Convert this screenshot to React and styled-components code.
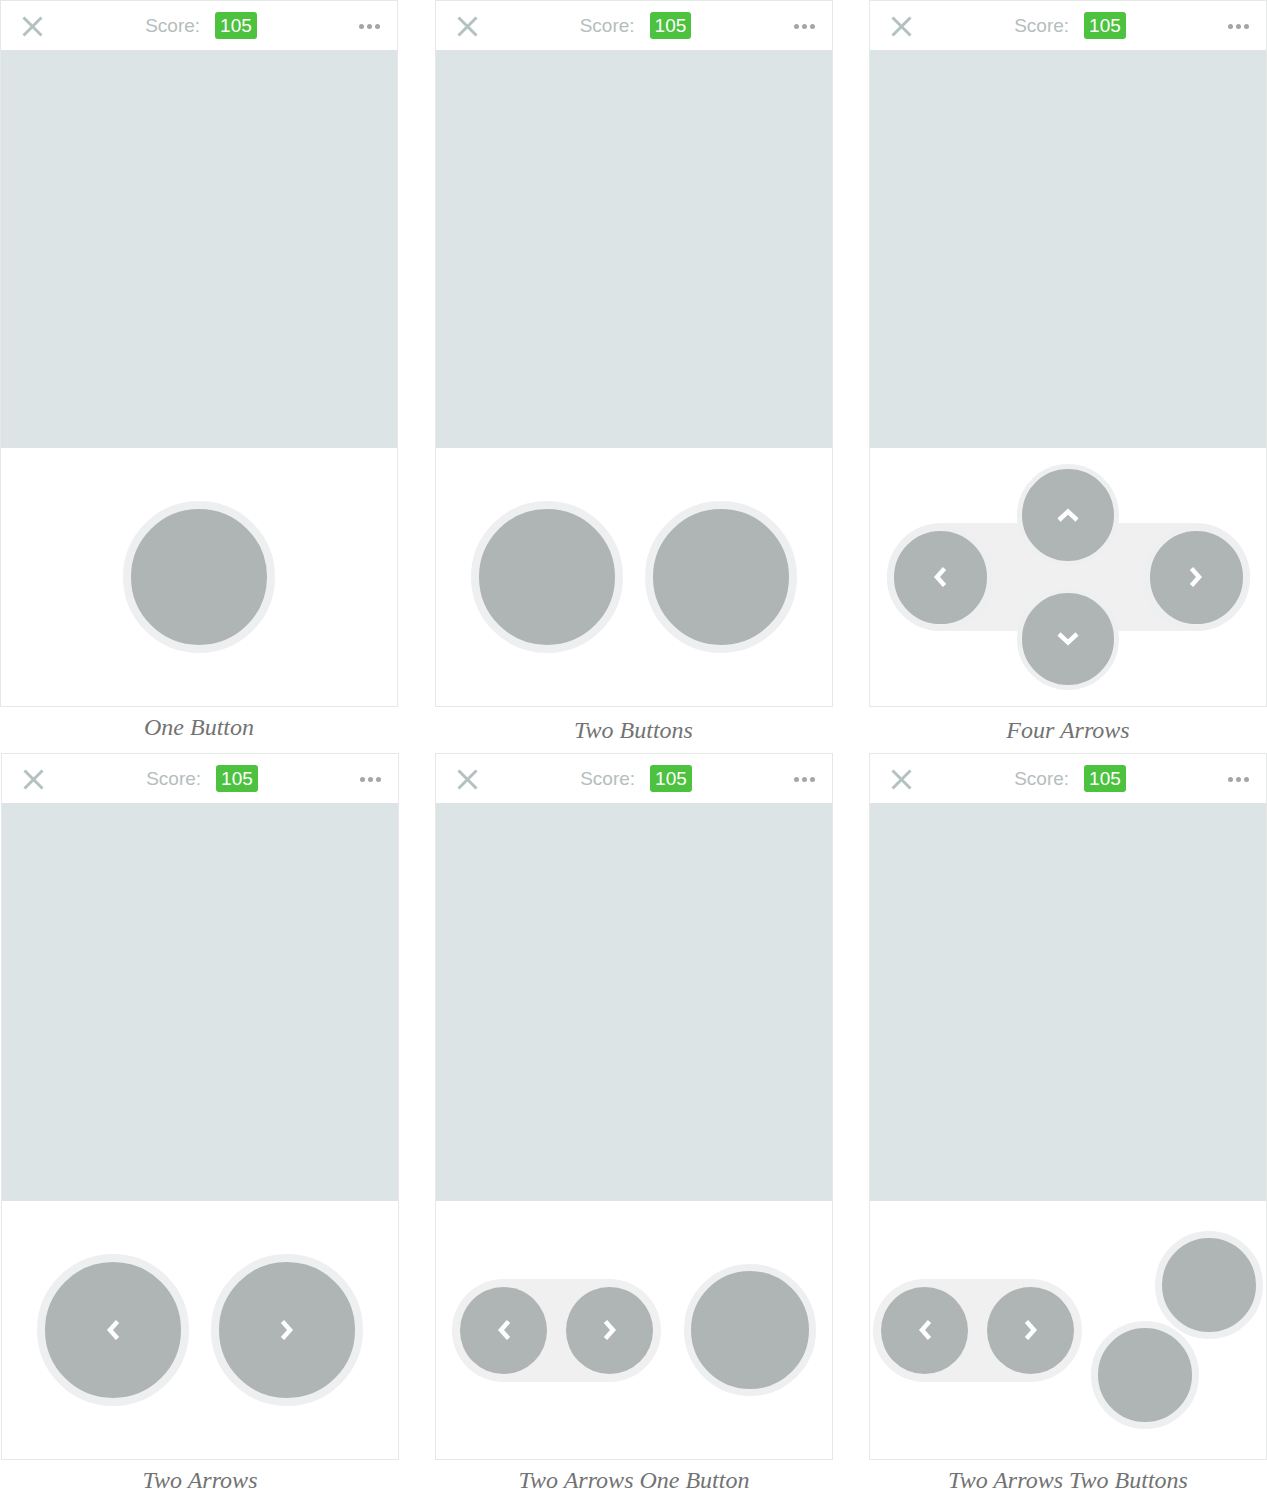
import React from 'react';
import styled, { createGlobalStyle } from 'styled-components';

const GlobalStyle = createGlobalStyle`
  body {
    margin: 0;
    background: #ffffff;
  }
`;

const Page = styled.div`
  width: 1267px;
  height: 1506px;
  display: flex;
  flex-direction: column;
`;

const Row = styled.div`
  display: grid;
  grid-template-columns: repeat(3, 398px);
  justify-content: space-between;
  padding-left: ${(props) => (props.$nudge ? '1px' : '0')};
  width: ${(props) => (props.$nudge ? '1266px' : '1267px')};
`;

const Figure = styled.div`
  display: flex;
  flex-direction: column;
`;

const Card = styled.div`
  border: 1px solid #e6e7e7;
  display: flex;
  flex-direction: column;
`;

const Header = styled.div`
  height: 49px;
  display: grid;
  grid-template-columns: 1fr auto 1fr;
  align-items: center;
  padding: 0 17px 0 21px;
  box-sizing: border-box;
`;

const CloseIcon = styled.svg`
  justify-self: start;
  margin-top: 2px;
`;

const Score = styled.div`
  display: flex;
  align-items: center;
  gap: 15px;
  font-family: 'Liberation Sans', Arial, sans-serif;
  font-size: 19px;
`;

const ScoreLabel = styled.span`
  color: #b5bdbd;
`;

const Badge = styled.span`
  background: #4cc23f;
  color: #ffffff;
  border-radius: 3px;
  height: 27px;
  line-height: 27px;
  padding: 0 5px;
`;

const Dots = styled.div`
  justify-self: end;
  display: flex;
  gap: 3px;
  margin-top: 1px;
`;

const Dot = styled.span`
  width: 5px;
  height: 5px;
  border-radius: 50%;
  background: #a2a6a6;
`;

const Screen = styled.div`
  height: 398px;
  background: #dde4e5;
`;

const Controls = styled.div`
  height: 258px;
  display: flex;
  align-items: center;
  justify-content: center;
  gap: ${(props) => props.$gap || 0}px;
`;

const Ball = styled.div`
  width: ${(props) => props.$size}px;
  height: ${(props) => props.$size}px;
  border: ${(props) => props.$ring || 0}px solid #eeeff0;
  border-radius: 50%;
  background: #afb4b5;
  display: flex;
  align-items: center;
  justify-content: center;
  flex-shrink: 0;
`;

const Pill = styled.div`
  display: flex;
  align-items: center;
  justify-content: ${(props) => (props.$spread ? 'space-between' : 'flex-start')};
  width: ${(props) => (props.$width ? `${props.$width}px` : 'auto')};
  height: ${(props) => props.$height}px;
  padding: 0 ${(props) => props.$pad || 0}px;
  gap: ${(props) => props.$gap || 0}px;
  box-sizing: border-box;
  border-radius: 999px;
  background: #f0f0f0;
`;

const DPad = styled.div`
  display: grid;
  place-items: center;
  & > * {
    grid-area: 1 / 1;
  }
`;

const Column = styled.div`
  display: flex;
  flex-direction: column;
  gap: 22px;
`;

const Cluster = styled.div`
  width: 172px;
  display: flex;
  flex-direction: column;
  & > :first-child {
    align-self: flex-end;
  }
  & > :last-child {
    align-self: flex-start;
    margin-top: -18px;
  }
`;

const Caption = styled.div`
  height: 46px;
  box-sizing: border-box;
  padding-top: ${(props) => (props.$drop ? 9 : 6)}px;
  line-height: 28px;
  text-align: center;
  font-family: 'Liberation Serif', 'Times New Roman', serif;
  font-style: italic;
  font-size: 24px;
  color: #727373;
`;

const Chevron = ({ dir }) => {
  if (dir === 'up' || dir === 'down') {
    const d = dir === 'up' ? 'M3 13 L12 4.5 L21 13' : 'M3 3 L12 11.5 L21 3';
    return (
      <svg width="24" height="16" viewBox="0 0 24 16">
        <path d={d} fill="none" stroke="#ffffff" strokeWidth="4.5" />
      </svg>
    );
  }
  const d = dir === 'left' ? 'M12.5 2.5 L5 11 L12.5 19.5' : 'M3.5 2.5 L11 11 L3.5 19.5';
  return (
    <svg width="16" height="22" viewBox="0 0 16 22">
      <path d={d} fill="none" stroke="#ffffff" strokeWidth="4.5" />
    </svg>
  );
};

const GameHeader = () => (
  <Header>
    <CloseIcon width="21" height="21" viewBox="0 0 21 21">
      <path d="M1.5 1.5 L19.5 19.5 M19.5 1.5 L1.5 19.5" stroke="#b4c1c1" strokeWidth="3" />
    </CloseIcon>
    <Score>
      <ScoreLabel>Score:</ScoreLabel>
      <Badge>105</Badge>
    </Score>
    <Dots>
      <Dot />
      <Dot />
      <Dot />
    </Dots>
  </Header>
);

const Mockup = ({ title, drop, children }) => (
  <Figure>
    <Card>
      <GameHeader />
      <Screen />
      {children}
    </Card>
    <Caption $drop={drop}>{title}</Caption>
  </Figure>
);

const ArrowPair = () => (
  <Pill $height={103} $pad={8} $gap={19}>
    <Ball $size={87}>
      <Chevron dir="left" />
    </Ball>
    <Ball $size={87}>
      <Chevron dir="right" />
    </Ball>
  </Pill>
);

const App = () => (
  <Page>
    <GlobalStyle />
    <Row>
      <Mockup title="One Button">
        <Controls>
          <Ball $size={136} $ring={8} />
        </Controls>
      </Mockup>
      <Mockup title="Two Buttons" drop>
        <Controls $gap={22}>
          <Ball $size={136} $ring={8} />
          <Ball $size={136} $ring={8} />
        </Controls>
      </Mockup>
      <Mockup title="Four Arrows" drop>
        <Controls>
          <DPad>
            <Pill $width={363} $height={108} $spread>
              <Ball $size={93} $ring={7}>
                <Chevron dir="left" />
              </Ball>
              <Ball $size={93} $ring={7}>
                <Chevron dir="right" />
              </Ball>
            </Pill>
            <Column>
              <Ball $size={92} $ring={5}>
                <Chevron dir="up" />
              </Ball>
              <Ball $size={92} $ring={5}>
                <Chevron dir="down" />
              </Ball>
            </Column>
          </DPad>
        </Controls>
      </Mockup>
    </Row>
    <Row $nudge>
      <Mockup title="Two Arrows">
        <Controls $gap={22}>
          <Ball $size={136} $ring={8}>
            <Chevron dir="left" />
          </Ball>
          <Ball $size={136} $ring={8}>
            <Chevron dir="right" />
          </Ball>
        </Controls>
      </Mockup>
      <Mockup title="Two Arrows One Button">
        <Controls $gap={23}>
          <ArrowPair />
          <Ball $size={118} $ring={7} />
        </Controls>
      </Mockup>
      <Mockup title="Two Arrows Two Buttons">
        <Controls $gap={9}>
          <ArrowPair />
          <Cluster>
            <Ball $size={94} $ring={7} />
            <Ball $size={94} $ring={7} />
          </Cluster>
        </Controls>
      </Mockup>
    </Row>
  </Page>
);

export default App;
